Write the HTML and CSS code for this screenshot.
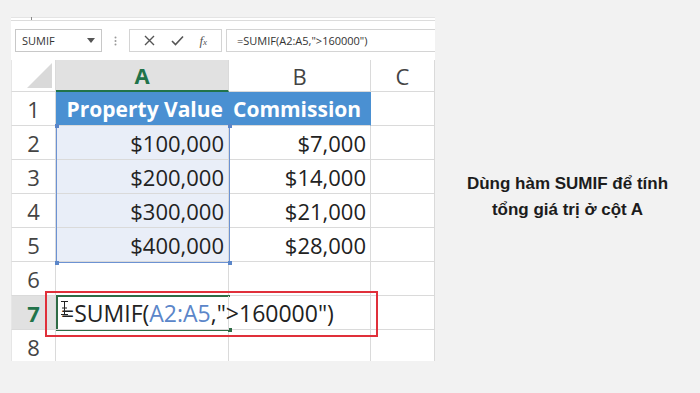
FILE: index.html
```html
<!DOCTYPE html>
<html lang="vi">
<head>
    <meta charset="UTF-8">
    <meta name="viewport" content="width=device-width, initial-scale=1.0">
    <title>SUMIF</title>
    <link rel="stylesheet" href="styles.css">
</head>
<body>
    <main class="slide">
        <section class="excel">
            <div class="ribbon-edge"><span class="tick"></span></div>

            <div class="formula-bar">
                <div class="name-box">
                    <span>SUMIF</span>
                    <svg width="8" height="5" viewBox="0 0 8 5"><path d="M0 0h8L4 5z" fill="#555"/></svg>
                </div>
                <div class="grip">
                    <svg width="3" height="10" viewBox="0 0 3 10"><circle cx="1.5" cy="1.5" r="1" fill="#999"/><circle cx="1.5" cy="5" r="1" fill="#999"/><circle cx="1.5" cy="8.5" r="1" fill="#999"/></svg>
                </div>
                <div class="fx-buttons">
                    <svg width="11" height="11" viewBox="0 0 11 11"><path d="M1 1l9 9M10 1l-9 9" stroke="#555" stroke-width="1.4"/></svg>
                    <svg width="13" height="11" viewBox="0 0 13 11"><path d="M1 6l3.5 3.5L12 1.5" stroke="#555" stroke-width="1.6" fill="none"/></svg>
                    <span class="fx">f<small>x</small></span>
                </div>
                <div class="formula-input">=SUMIF(A2:A5,"&gt;160000")</div>
            </div>

            <div class="sheet">
                <div class="corner"><span class="corner-tri"></span></div>
                <div class="col-head selected">A</div>
                <div class="col-head">B</div>
                <div class="col-head">C</div>

                <div class="row-head">1</div>
                <div class="cell title title-a">Property Value</div>
                <div class="cell title title-b">Commission</div>
                <div class="cell"></div>

                <div class="row-head">2</div>
                <div class="cell num in-range">$100,000</div>
                <div class="cell num">$7,000</div>
                <div class="cell"></div>

                <div class="row-head">3</div>
                <div class="cell num in-range">$200,000</div>
                <div class="cell num">$14,000</div>
                <div class="cell"></div>

                <div class="row-head">4</div>
                <div class="cell num in-range">$300,000</div>
                <div class="cell num">$21,000</div>
                <div class="cell"></div>

                <div class="row-head">5</div>
                <div class="cell num in-range">$400,000</div>
                <div class="cell num">$28,000</div>
                <div class="cell"></div>

                <div class="row-head">6</div>
                <div class="cell"></div>
                <div class="cell"></div>
                <div class="cell"></div>

                <div class="row-head selected">7</div>
                <div class="cell editing">=SUMIF(<span class="ref">A2:A5</span>,"&gt;160000")</div>
                <div class="cell"></div>
                <div class="cell"></div>

                <div class="row-head">8</div>
                <div class="cell"></div>
                <div class="cell"></div>
                <div class="cell"></div>

                <!-- overlays -->
                <div class="range-ref">
                    <span class="handle tl"></span><span class="handle tr"></span>
                    <span class="handle bl"></span><span class="handle br"></span>
                </div>
                <div class="active-cell"><span class="handle br"></span></div>
                <svg class="ibeam" width="7" height="14" viewBox="0 0 7 14"><path d="M0 .5h7M0 13.5h7M3.5 .5v13M1 7h5" stroke="#222" stroke-width="1" fill="none"/></svg>
                <div class="red-box"></div>
            </div>
        </section>

        <section class="caption">
            <p>Dùng hàm SUMIF để tính<br>tổng giá trị ở cột A</p>
        </section>
    </main>
</body>
</html>
```

FILE: styles.css
```css
* {
    margin: 0;
    padding: 0;
    box-sizing: border-box;
}

body {
    background: #f2f2f2;
    font-family: 'Open Sans', 'Liberation Sans', sans-serif;
}

.slide {
    display: flex;
    width: 700px;
    height: 393px;
}

/* excel screenshot */
.excel {
    width: 424px;
    height: 344px;
    margin: 17px 0 0 11px;
    background: #fff;
    overflow: hidden;
}

.ribbon-edge {
    position: relative;
    height: 12px;
    border-top: 1px solid #e4e4e4;
}

.ribbon-edge::after {
    content: '';
    display: block;
    margin-top: 2px;
    border-top: 1px solid #dcdcdc;
}

.tick {
    position: absolute;
    left: 20px;
    top: -1px;
    width: 1px;
    height: 3px;
    background: #888;
}

.formula-bar {
    display: flex;
    align-items: stretch;
    height: 23px;
    margin-bottom: 8px;
    padding-left: 4px;
    font-size: 11px;
    color: #333;
}

.name-box {
    width: 87px;
    display: flex;
    align-items: center;
    justify-content: space-between;
    padding: 0 6px 0 6px;
    border: 1px solid #c8c8c8;
}

.grip {
    width: 27px;
    display: flex;
    align-items: center;
    justify-content: center;
}

.fx-buttons {
    width: 93px;
    display: flex;
    align-items: center;
    justify-content: space-around;
    padding: 0 6px;
    border: 1px solid #d4d4d4;
}

.fx {
    font-family: 'Liberation Serif', serif;
    font-style: italic;
    font-size: 13px;
    color: #555;
}

.fx small {
    font-size: 9px;
}

.formula-input {
    flex: 1;
    margin-left: 4px;
    padding-left: 10px;
    display: flex;
    align-items: center;
    border: 1px solid #d4d4d4;
    border-right: none;
}

/* grid */
.sheet {
    position: relative;
    display: grid;
    grid-template-columns: 45px 173px 142px 64px;
    grid-template-rows: 32px repeat(8, 34px);
    font-size: 22px;
    color: #222;
}

.corner,
.col-head,
.row-head,
.cell {
    border-right: 1px solid #dadada;
    border-bottom: 1px solid #dadada;
}

.corner {
    position: relative;
    border-left: 1px solid #e6e6e6;
}

.corner-tri {
    position: absolute;
    right: 3px;
    bottom: 3px;
    width: 0;
    height: 0;
    border-left: 25px solid transparent;
    border-bottom: 25px solid #d9d9d9;
}

.col-head {
    display: flex;
    align-items: center;
    justify-content: center;
    color: #444;
}

.col-head.selected {
    background: #e1e1e1;
    color: #21734a;
    font-weight: 700;
    border-bottom: 2px solid #21734a;
}

.row-head {
    display: flex;
    align-items: center;
    justify-content: center;
    color: #444;
    border-left: 1px solid #e6e6e6;
}

.row-head.selected {
    background: #e1e1e1;
    color: #21734a;
    font-weight: 700;
}

.cell {
    display: flex;
    align-items: center;
    padding: 0 4px;
    white-space: nowrap;
}

.cell.title {
    background: #4a90d2;
    color: #fff;
    font-weight: 700;
    font-size: 21px;
    border-right-color: #4a90d2;
}

.title-a {
    justify-content: flex-end;
    padding-right: 5px;
}

.title-b {
    padding-left: 4px;
}

.cell.num {
    justify-content: flex-end;
}

.cell.in-range {
    background: #e9eef8;
}

.cell.editing {
    position: relative;
    z-index: 1;
    padding-left: 5px;
    font-size: 23px;
    overflow: visible;
}

.ref {
    color: #5b86c9;
}

/* overlays */
.range-ref {
    position: absolute;
    left: 45px;
    top: 66px;
    width: 174px;
    height: 137px;
    border: 1px solid #6c92d3;
    border-top: none;
}

.handle {
    position: absolute;
    width: 4px;
    height: 4px;
    background: #5b86c9;
}

.handle.tl { left: -2px; top: -2px; }
.handle.tr { right: -3px; top: -2px; }
.handle.bl { left: -2px; bottom: -3px; }
.handle.br { right: -3px; bottom: -3px; }

.active-cell {
    position: absolute;
    left: 45px;
    top: 235px;
    width: 174px;
    height: 36px;
    border: 2px solid #2e6b45;
    border-right: none;
}

.active-cell .handle {
    background: #2e6b45;
    right: -2px;
}

.ibeam {
    position: absolute;
    left: 50px;
    top: 241px;
    z-index: 2;
}

.red-box {
    position: absolute;
    left: 34px;
    top: 231px;
    width: 333px;
    height: 46px;
    border: 2px solid #e0303a;
}

/* caption */
.caption {
    flex: 1;
    display: flex;
    align-items: center;
    justify-content: center;
}

.caption p {
    font-family: 'Liberation Sans', Arial, sans-serif;
    font-weight: 700;
    font-size: 17px;
    line-height: 26px;
    text-align: center;
    color: #1c1c1c;
}
```
